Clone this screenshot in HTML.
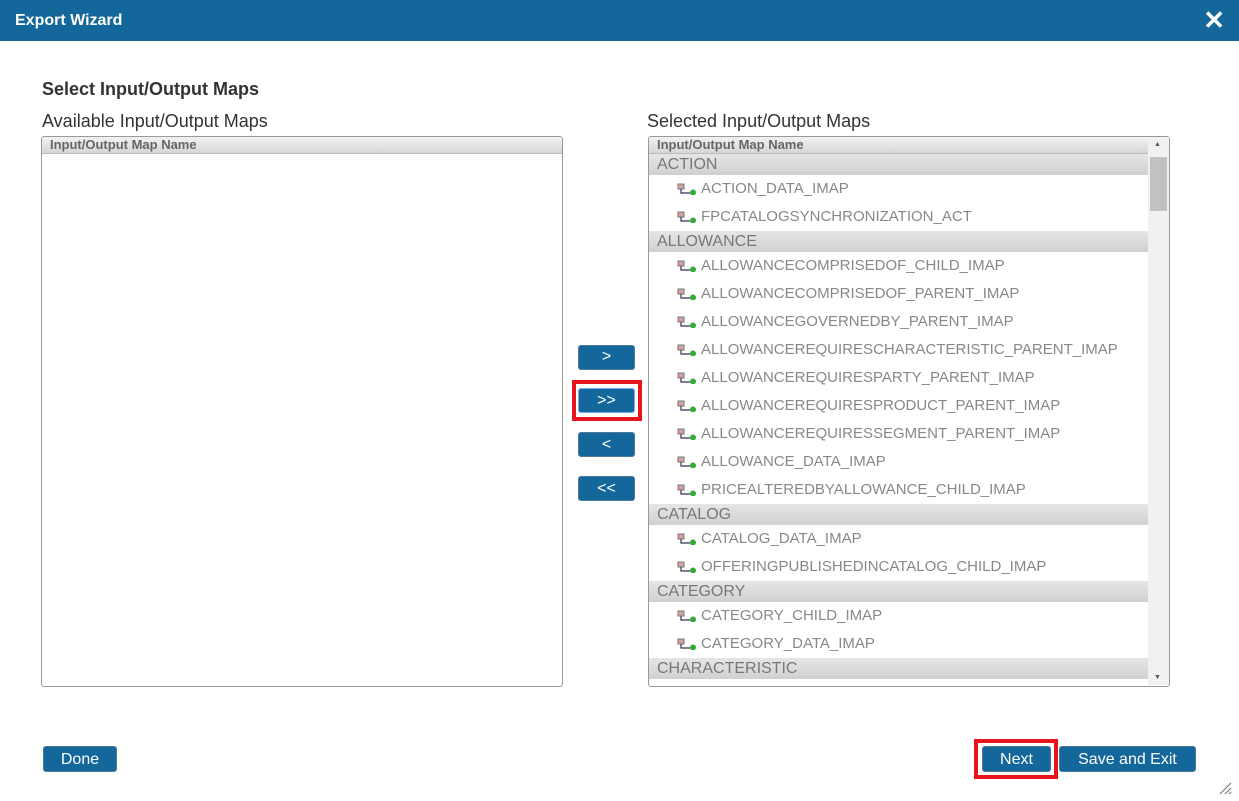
<!DOCTYPE html>
<html><head><style>
*{box-sizing:border-box;margin:0;padding:0}
body{width:1239px;height:801px;background:#fff;font-family:"Liberation Sans",sans-serif;position:relative;overflow:hidden}
.hdr{position:absolute;left:0;top:0;width:1239px;height:41px;background:#14679a;color:#fff;font-weight:bold;font-size:16px;line-height:42px;padding-left:15px}
.x{position:absolute;right:14px;top:7px;font-size:26px;line-height:26px;font-weight:bold}
.abs{position:absolute}
.t1{left:42px;top:79px;font-size:18px;font-weight:bold;color:#333}
.t2{font-size:18px;color:#333}
.box{border:1px solid #999;border-radius:3px;background:#fff;overflow:hidden}
.th{height:17px;background:linear-gradient(#f2f2f2,#d6d6d6);border-bottom:1px solid #bbb;font-size:13px;font-weight:bold;color:#666;line-height:16px;padding-left:8px}
.g{height:21px;background:linear-gradient(#e6e6e6,#d0d0d0);color:#777;font-size:16px;line-height:21px;padding-left:8px}
.i{height:28px;line-height:28px;font-size:15px;color:#888;padding-left:28px;position:relative}
.i svg{position:absolute;left:28px;top:8px}
.i span{margin-left:24px}
.btn{position:absolute;background:#14679a;color:#fff;border-radius:3px;border:1px solid #4d7a99;text-align:center;font-size:16px}
.sb{position:absolute;left:1148px;top:137px;width:21px;height:548px;background:#f1f1f1}
.red{position:absolute;border:4px solid #e8141c}
</style></head><body>
<div class="hdr">Export Wizard<span class="x">✕</span></div>
<div class="abs t1">Select Input/Output Maps</div>
<div class="abs t2" style="left:42px;top:111px">Available Input/Output Maps</div>
<div class="abs t2" style="left:647px;top:111px">Selected Input/Output Maps</div>
<div class="abs box" style="left:41px;top:136px;width:522px;height:551px"><div class="th">Input/Output Map Name</div></div>
<div class="abs box" style="left:648px;top:136px;width:522px;height:551px">
<div style="width:500px">
<div class="th">Input/Output Map Name</div>
<div class="g">ACTION</div>
<div id="l"></div>
</div></div>
<div class="sb"><div style="position:absolute;left:6px;top:4px;font-size:7px;color:#555">▲</div><div style="position:absolute;left:2px;top:20px;width:17px;height:54px;background:#c1c1c1"></div><div style="position:absolute;left:6px;bottom:4px;font-size:7px;color:#555">▼</div></div>
<div class="btn" style="left:578px;top:345px;width:57px;height:25px;line-height:22px">&gt;</div>
<div class="red" style="left:572px;top:380px;width:70px;height:41px"></div>
<div class="btn" style="left:578px;top:388px;width:57px;height:25px;line-height:24px;border-color:#7aa7ff">&gt;&gt;</div>
<div class="btn" style="left:578px;top:432px;width:57px;height:25px;line-height:24px">&lt;</div>
<div class="btn" style="left:578px;top:476px;width:57px;height:25px;line-height:24px">&lt;&lt;</div>
<div class="btn" style="left:43px;top:746px;width:74px;height:26px;line-height:25px">Done</div>
<div class="red" style="left:974px;top:739px;width:84px;height:40px"></div>
<div class="btn" style="left:982px;top:746px;width:69px;height:26px;line-height:25px">Next</div>
<div class="btn" style="left:1059px;top:746px;width:137px;height:26px;line-height:25px">Save and Exit</div>
<svg class="abs" style="left:1218px;top:781px" width="14" height="14"><path d="M2 13L13 2M7 13L13 7M11 13L13 11" stroke="#777" stroke-width="1.2"/></svg>
<script>
var ic='<svg width="22" height="12"><rect x="1" y="1" width="6" height="5" fill="#d9a0a0" stroke="#777" stroke-width="1"/><path d="M4 6V10H13" stroke="#335" fill="none" stroke-width="1.2"/><circle cx="16" cy="9.5" r="3" fill="#3a3"/></svg>';
var d=[["ACTION_DATA_IMAP","FPCATALOGSYNCHRONIZATION_ACT"],"ALLOWANCE",["ALLOWANCECOMPRISEDOF_CHILD_IMAP","ALLOWANCECOMPRISEDOF_PARENT_IMAP","ALLOWANCEGOVERNEDBY_PARENT_IMAP","ALLOWANCEREQUIRESCHARACTERISTIC_PARENT_IMAP","ALLOWANCEREQUIRESPARTY_PARENT_IMAP","ALLOWANCEREQUIRESPRODUCT_PARENT_IMAP","ALLOWANCEREQUIRESSEGMENT_PARENT_IMAP","ALLOWANCE_DATA_IMAP","PRICEALTEREDBYALLOWANCE_CHILD_IMAP"],"CATALOG",["CATALOG_DATA_IMAP","OFFERINGPUBLISHEDINCATALOG_CHILD_IMAP"],"CATEGORY",["CATEGORY_CHILD_IMAP","CATEGORY_DATA_IMAP"],"CHARACTERISTIC",["X"]];
var h='';d.forEach(function(x){if(typeof x=="string")h+='<div class="g">'+x+'</div>';else x.forEach(function(y){h+='<div class="i">'+ic+'<span>'+y+'</span></div>';});});
document.getElementById('l').outerHTML=h;
</script>
</body></html>
